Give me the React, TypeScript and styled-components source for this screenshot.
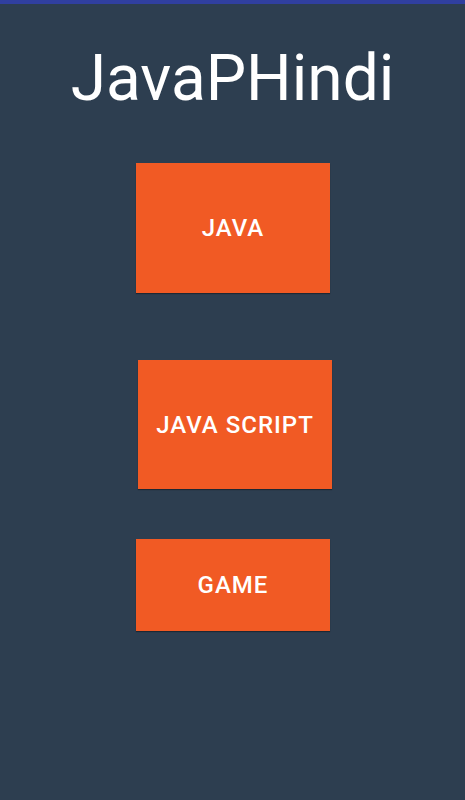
import React from 'react';
import styled, { createGlobalStyle } from 'styled-components';

const GlobalStyle = createGlobalStyle`
html, body {
  margin: 0;
  padding: 0;
  background: #2d3e50;
}

#root {
  min-height: 100vh;
}
`;

const Screen = styled.div`
min-height: 800px;
display: flex;
flex-direction: column;
align-items: center;
background: #2d3e50;
font-family: Roboto, "Noto Sans", sans-serif;
`;

const StatusStrip = styled.div`
align-self: stretch;
height: 4px;
background: #303f9f;
`;

const Title = styled.h1`
margin: 36px 0 0 0;
font-size: 64px;
font-weight: 400;
line-height: 77px;
color: #ffffff;
`;

const MenuList = styled.div`
display: flex;
flex-direction: column;
align-items: center;
margin-top: 46px;
`;

const MenuButton = styled.button<{ $height: number; $gap: number; $shift?: number }>`
width: 194px;
height: ${p => p.$height}px;
margin-top: ${p => p.$gap}px;
margin-left: ${p => (p.$shift || 0) * 2}px;
display: flex;
justify-content: center;
align-items: center;
border: none;
border-radius: 0;
background: #f15a24;
box-shadow: 0 1px 1px rgba(0, 0, 0, 0.35);
color: #ffffff;
font-family: Roboto, "Noto Sans", sans-serif;
font-size: 24px;
font-weight: 500;
letter-spacing: 1px;
text-indent: 1px;
padding: 0;
cursor: pointer;
`;

const items = [
  { label: 'JAVA', height: 130, gap: 0, shift: 0 },
  { label: 'JAVA SCRIPT', height: 129, gap: 67, shift: 2 },
  { label: 'GAME', height: 92, gap: 50, shift: 0 },
];

function App() {
  return (
    <Screen>
      <GlobalStyle />
      <StatusStrip />
      <Title>JavaPHindi</Title>
      <MenuList>
        {items.map(item => (
          <MenuButton
            key={item.label}
            $height={item.height}
            $gap={item.gap}
            $shift={item.shift}
          >
            {item.label}
          </MenuButton>
        ))}
      </MenuList>
    </Screen>
  );
}

export default App;
